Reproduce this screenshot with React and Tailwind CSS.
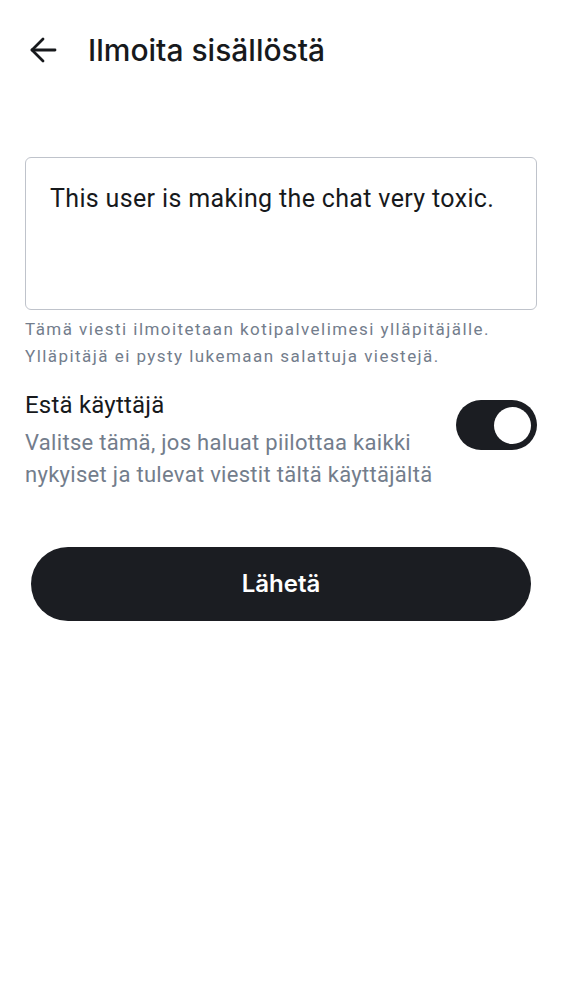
import React, { useState } from 'react';

const ReportScreen = () => {
  const [block, setBlock] = useState(true);

  return (
    <div className="min-h-screen w-full bg-white text-[#17191c] font-['Roboto','Liberation_Sans',sans-serif]">
      {/* Header */}
      <div className="flex items-center h-[100px] pl-[30px]">
        <svg width="28" height="26" viewBox="0 0 28 26" fill="none" stroke="#17191c" strokeWidth="2.8" strokeLinecap="round" strokeLinejoin="round">
          <path d="M2 13h23" />
          <path d="M13 2 2 13l11 11" />
        </svg>
        <h1 className="ml-[30px] text-[30px] font-medium tracking-[0px] font-['Inter','Roboto',sans-serif]">Ilmoita sisällöstä</h1>
      </div>

      <div className="px-[25px] pt-[57px]">
        {/* Reason */}
        <div className="h-[153px] rounded-[6px] border border-[#bfc3cb] px-[24px] pt-[25px]">
          <p className="text-[25px] leading-[32px] tracking-[0.35px] text-[#17191c]">This user is making the chat very toxic.</p>
        </div>
        <p className="mt-[6px] text-[17px] leading-[27px] tracking-[1.45px] text-[#737d8c]">
          Tämä viesti ilmoitetaan kotipalvelimesi ylläpitäjälle.
          <br />
          Ylläpitäjä ei pysty lukemaan salattuja viestejä.
        </p>

        {/* Block user */}
        <div className="mt-[19px] flex items-start justify-between">
          <div>
            <p className="text-[24px] leading-[32px] tracking-[0.2px] text-[#17191c]">Estä käyttäjä</p>
            <p className="mt-[6px] text-[22px] leading-[32px] tracking-[0.3px] text-[#737d8c]">
              Valitse tämä, jos haluat piilottaa kaikki
              <br />
              nykyiset ja tulevat viestit tältä käyttäjältä
            </p>
          </div>
          <button
            onClick={() => setBlock(!block)}
            className={`mt-[11px] flex h-[50px] w-[81px] shrink-0 items-center rounded-full px-[6px] ${block ? 'justify-end bg-[#1b1d22]' : 'justify-start bg-[#c2c6cd]'}`}
          >
            <span className="block h-[37px] w-[37px] rounded-full bg-white" />
          </button>
        </div>

        {/* Submit */}
        <div className="px-[6px] pt-[56px]">
          <button className="flex h-[74px] w-full items-center justify-center rounded-full bg-[#1b1d22] text-[24px] font-semibold text-white font-['Inter','Roboto',sans-serif]">
            Lähetä
          </button>
        </div>
      </div>
    </div>
  );
};

export default ReportScreen;
